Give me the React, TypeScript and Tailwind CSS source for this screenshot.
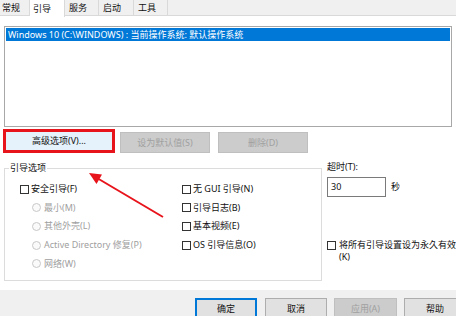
import React from "react";

const tabs = [
  { label: "常规", w: "w-[30px]" },
  { label: "引导", w: "w-[35px]", active: true },
  { label: "服务", w: "w-[34px]" },
  { label: "启动", w: "w-[35px]" },
  { label: "工具", w: "w-[34px]" },
];

function Check({ label, disabled }: { label: string; disabled?: boolean }) {
  return (
    <div className="flex h-[18.6px] items-center">
      <span
        className={`w-[9px] h-[9px] border bg-white shrink-0 ${
          disabled ? "border-[#c4c4c4]" : "border-[#333]"
        }`}
      />
      <span className={`ml-[2px] whitespace-nowrap ${disabled ? "text-[#a0a0a0]" : "text-[#111]"}`}>{label}</span>
    </div>
  );
}

function Radio({ label }: { label: string }) {
  return (
    <div className="flex h-[18.6px] items-center pl-[12px]">
      <span className="w-[9px] h-[9px] rounded-full border border-[#c8c8c8] bg-[#fafafa] shrink-0" />
      <span className="ml-[3px] whitespace-nowrap text-[#a0a0a0]">{label}</span>
    </div>
  );
}

function DlgButton({
  label,
  w,
  variant = "normal",
  className = "",
}: {
  label: string;
  w: string;
  variant?: "normal" | "default" | "disabled";
  className?: string;
}) {
  const styles = {
    normal: "bg-[#e1e1e1] border border-[#adadad] text-[#111]",
    default: "bg-[#e1e1e1] border-2 border-[#0078d7] text-[#111]",
    disabled: "bg-[#cccccc] border border-[#bfbfbf] text-[#a0a0a0]",
  }[variant];
  return (
    <div className={`${w} h-[21px] flex items-center justify-center shrink-0 whitespace-nowrap ${styles} ${className}`}>
      {label}
    </div>
  );
}

export default function App() {
  return (
    <div className="relative w-[456px] h-[316px] overflow-hidden bg-[#f0f0f0] text-[9px] leading-[12px] font-['Noto_Sans','Noto_Sans_CJK_SC',sans-serif] text-[#111]">
      {/* tab strip */}
      <div className="flex h-[16px] border-b border-[#d9d9d9]">
        {tabs.map((t) => (
          <div
            key={t.label}
            className={`${t.w} shrink-0 flex items-center whitespace-nowrap overflow-hidden border-r border-[#d9d9d9] ${
              t.active ? "bg-white h-[17px] pl-[3px] relative z-10" : "bg-[#f0f0f0] pl-[4px]"
            } ${t.label === "常规" ? "justify-end pr-[9px] pl-0" : ""}`}
          >
            {t.label}
          </div>
        ))}
      </div>

      {/* page */}
      <div className="bg-white h-[274px] flex flex-col">
        <div className="mt-[10px] mx-[4px] h-[101px] border border-[#a8a8a8] p-[1px]">
          <div className="h-[13px] bg-[#0078d7] text-white pl-[2px] leading-[13px] whitespace-nowrap">
            Windows 10 (C:\WINDOWS) : 当前操作系统: 默认操作系统
          </div>
        </div>

        <div className="flex items-start mt-[2px]">
          <div className="ml-[3px] w-[112px] h-[24px] border-[3px] border-[#e8141c] bg-[#e5f1fb] flex items-center justify-center text-[#111]">
            高级选项(V)...
          </div>
          <DlgButton label="设为默认值(S)" w="w-[90px]" variant="disabled" className="ml-[5px] mt-[3px]" />
          <DlgButton label="删除(D)" w="w-[90px]" variant="disabled" className="ml-[8px] mt-[3px]" />
        </div>

        <div className="flex mt-[9px]">
          <fieldset className="ml-[4px] w-[321px] h-[119px] border border-[#dcdcdc]">
            <legend className="ml-[4px] px-[1px] leading-[12px] text-[#111]">引导选项</legend>
            <div className="flex pt-[6px]">
              <div className="w-[177px] pl-[15px]">
                <Check label="安全引导(F)" />
                <Radio label="最小(M)" />
                <Radio label="其他外壳(L)" />
                <Radio label="Active Directory 修复(P)" />
                <Radio label="网络(W)" />
              </div>
              <div>
                <Check label="无 GUI 引导(N)" />
                <Check label="引导日志(B)" />
                <Check label="基本视频(E)" />
                <Check label="OS 引导信息(O)" />
              </div>
            </div>
          </fieldset>

          <div className="ml-[5px] flex flex-col">
            <div className="leading-[12px] -mt-[1px]">超时(T):</div>
            <div className="flex items-center mt-[4px]">
              <div className="w-[59px] h-[20px] border border-[#7a7a7a] bg-white pl-[3px] flex items-center">30</div>
              <span className="ml-[5px]">秒</span>
            </div>
            <div className="flex items-start mt-[42px]">
              <span className="w-[9px] h-[9px] border border-[#333] bg-white shrink-0 mt-[2px]" />
              <div className="ml-[3px] leading-[12px] whitespace-nowrap">
                <div>将所有引导设置设为永久有效</div>
                <div>(K)</div>
              </div>
            </div>
          </div>
        </div>
      </div>

      {/* dialog buttons */}
      <div className="flex justify-end pt-[8px] gap-[7px]">
        <DlgButton label="确定" w="w-[62px]" variant="default" className="mr-[1px]" />
        <DlgButton label="取消" w="w-[62px]" />
        <DlgButton label="应用(A)" w="w-[63px]" variant="disabled" />
        <DlgButton label="帮助" w="w-[62px]" className="-mr-[10px]" />
      </div>

      {/* annotation arrow */}
      <svg className="absolute left-0 top-0 pointer-events-none" width="456" height="316">
        <line x1="163" y1="217" x2="97" y2="178" stroke="#e8141c" strokeWidth="2" />
        <polygon points="89,173 102,174.5 96.5,184" fill="#e8141c" />
      </svg>
    </div>
  );
}
